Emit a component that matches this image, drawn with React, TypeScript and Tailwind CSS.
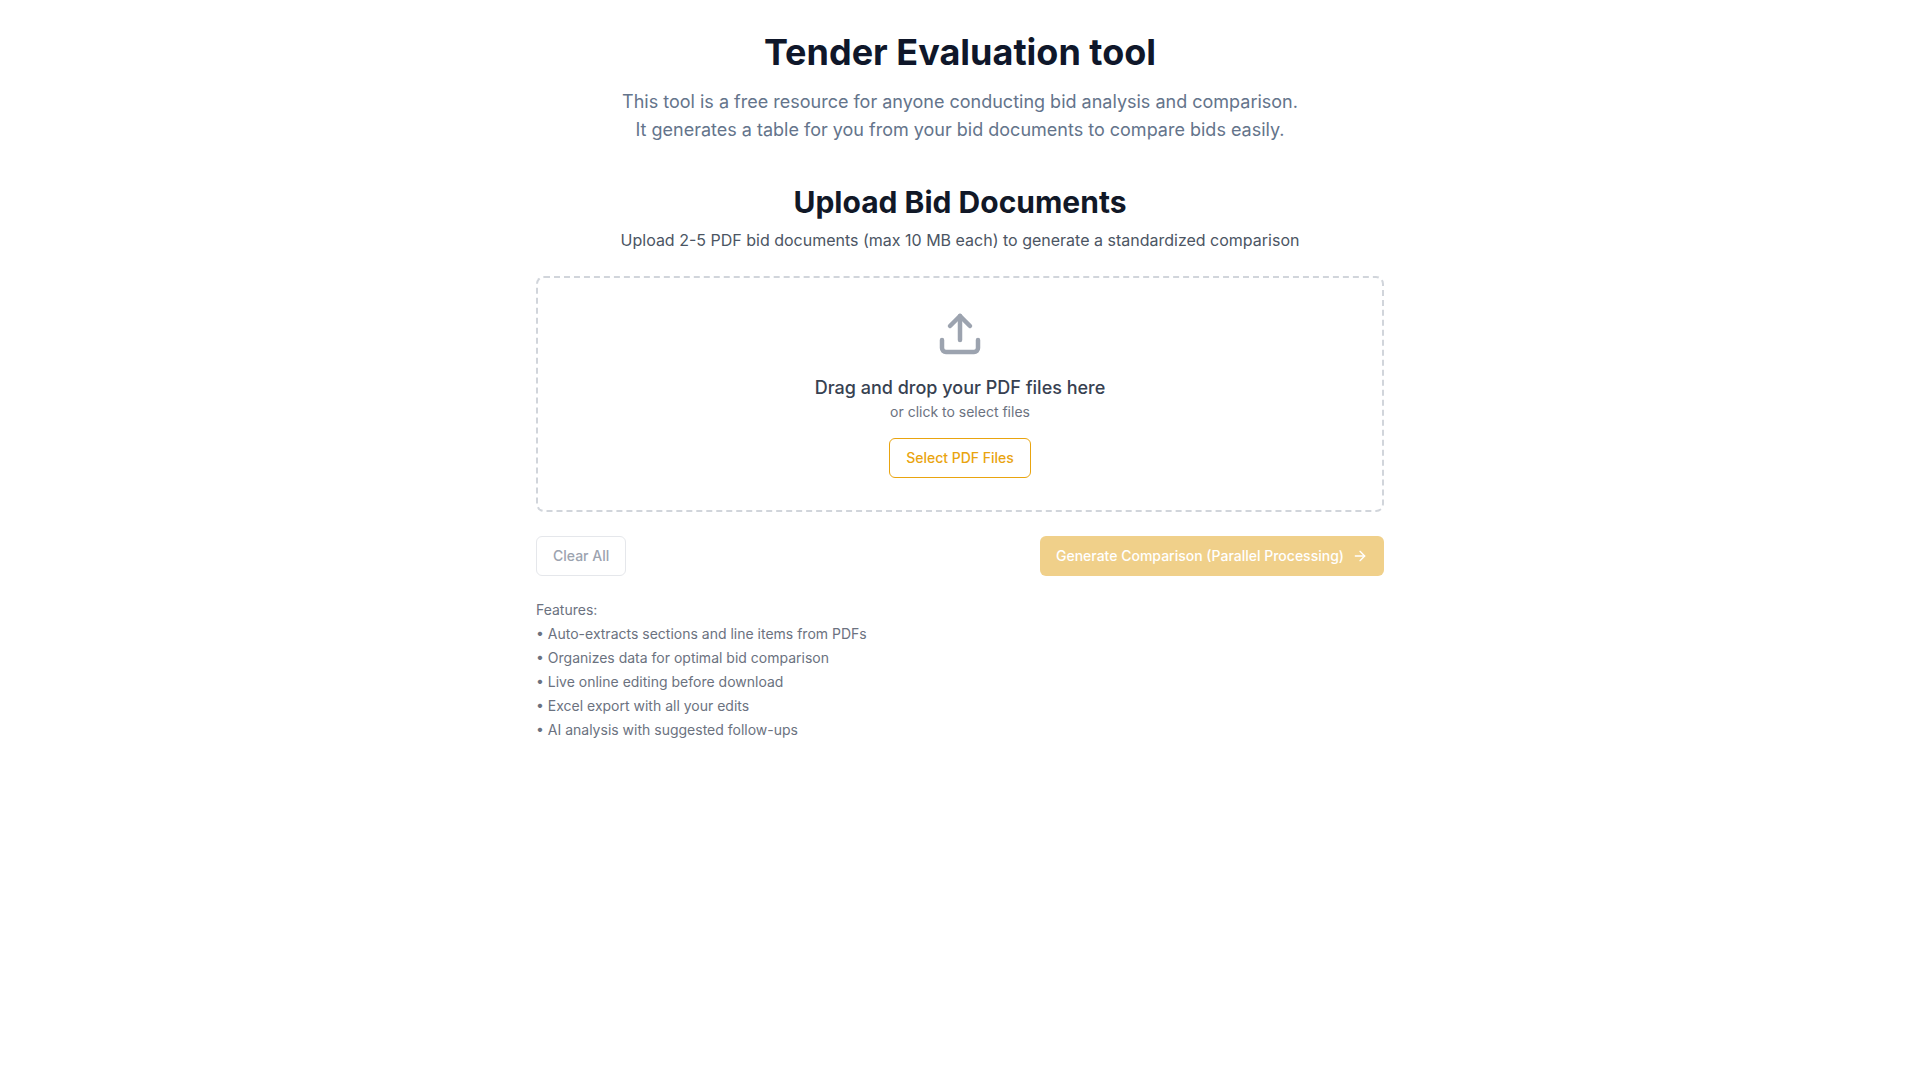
import { ArrowRight, Upload } from "lucide-react";

const features = [
  "Auto-extracts sections and line items from PDFs",
  "Organizes data for optimal bid comparison",
  "Live online editing before download",
  "Excel export with all your edits",
  "AI analysis with suggested follow-ups",
];

export default function App() {
  return (
    <div className="min-h-screen bg-white font-['Inter',sans-serif] antialiased">
      <div className="mx-auto max-w-[896px] px-6 py-8">
        <div className="mb-10 text-center">
          <h1 className="mb-4 text-4xl font-bold text-[#0f172a]">Tender Evaluation tool</h1>
          <p className="text-lg text-[#64748b]">
            This tool is a free resource for anyone conducting bid analysis and comparison.
            <br />
            It generates a table for you from your bid documents to compare bids easily.
          </p>
        </div>
        <div className="mb-6 text-center">
          <h2 className="mb-2 text-3xl font-bold text-[#111827]">Upload Bid Documents</h2>
          <p className="text-base text-[#4b5563]">
            Upload 2-5 PDF bid documents (max 10 MB each) to generate a standardized comparison
          </p>
        </div>
        <div className="flex flex-col items-center rounded-lg border-2 border-dashed border-[#d1d5db] p-8 text-center">
          <Upload className="mb-4 h-12 w-12 text-[#9ca3af]" strokeWidth={2.25} />
          <p className="text-lg font-medium text-[#374151]">Drag and drop your PDF files here</p>
          <p className="mb-4 text-sm text-[#6b7280]">or click to select files</p>
          <button className="h-10 rounded-md border border-[#e9a40f] bg-white px-4 text-sm font-medium text-[#e9a40f]">
            Select PDF Files
          </button>
        </div>
        <div className="mt-6 flex items-center justify-between">
          <button className="h-10 rounded-md border border-[#e5e7eb] bg-white px-4 text-sm font-medium text-[#9ca3af]">
            Clear All
          </button>
          <button className="flex h-10 items-center gap-2 rounded-md bg-[#f0d08a] px-4 text-sm font-medium text-white">
            Generate Comparison (Parallel Processing)
            <ArrowRight className="h-4 w-4" />
          </button>
        </div>
        <div className="mt-[22px] text-sm leading-6 text-[#6b7280]">
          <p>Features:</p>
          {features.map((f) => (
            <p key={f}>• {f}</p>
          ))}
        </div>
      </div>
    </div>
  );
}
